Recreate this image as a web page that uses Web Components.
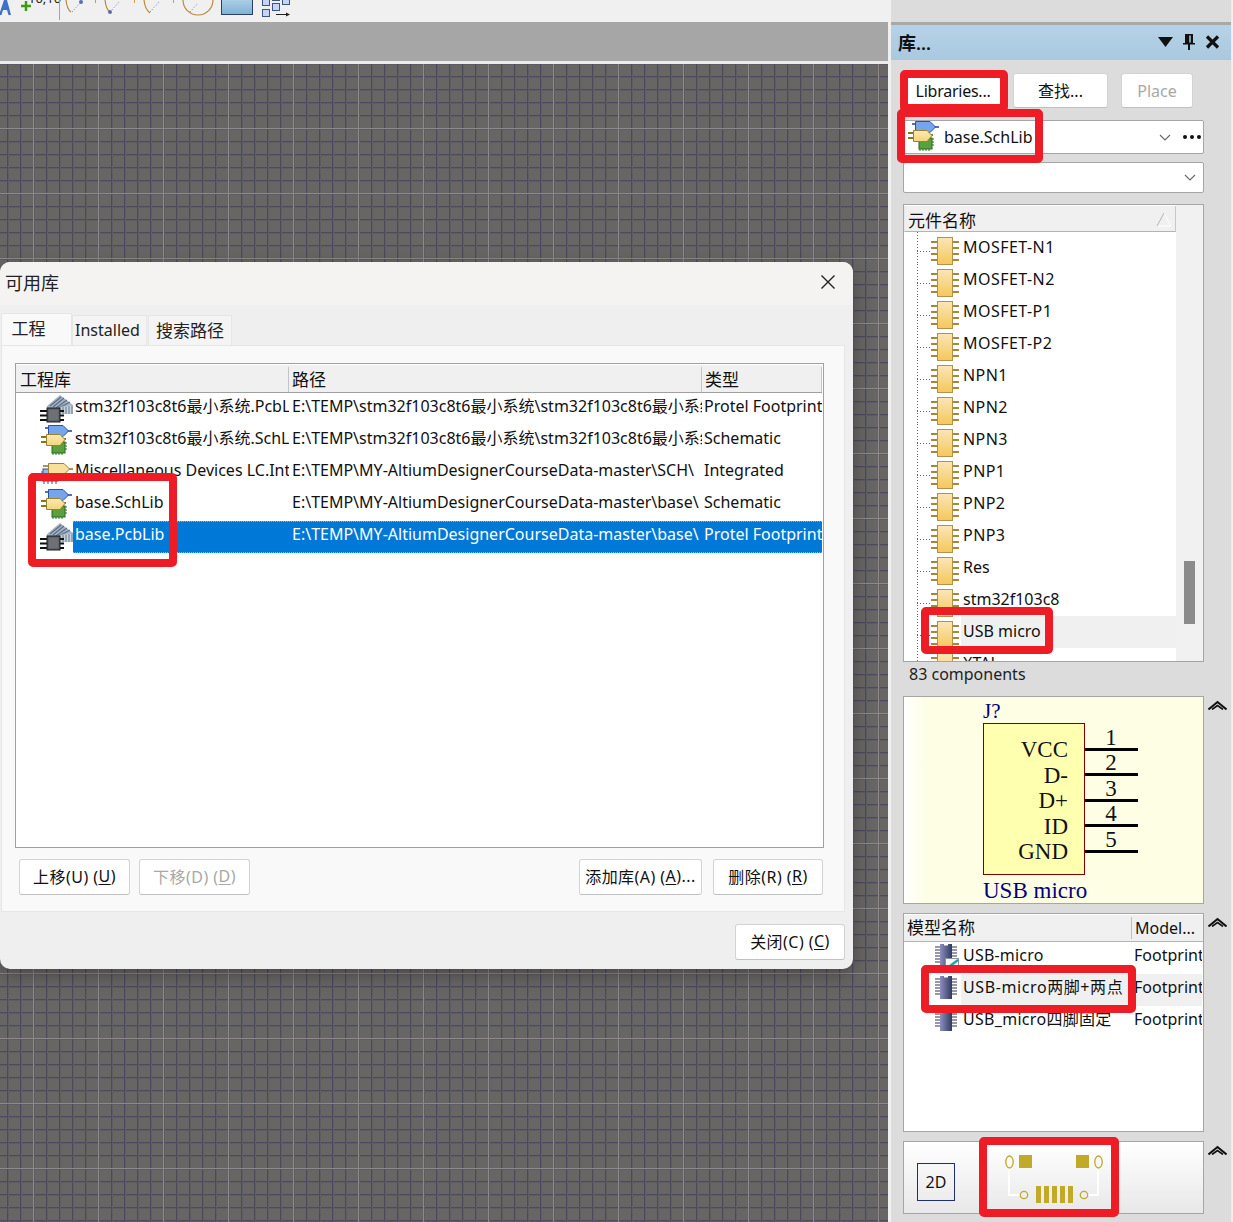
<!DOCTYPE html>
<html lang="zh">
<head>
<meta charset="utf-8">
<title>Libraries</title>
<style>
  html, body { margin: 0; height: 100%; }
  body {
    width: 1233px;
    height: 1222px;
    overflow: hidden;
    position: relative;
    background: #f0f0f0;
    color: #111;
    font: 16px "Noto Sans", "Noto Sans CJK SC", sans-serif;
    display: grid;
    grid-template-columns: 888px 345px;
  }
</style>
</head>
<body>
  <editor-area>
    <libraries-dialog></libraries-dialog>
  </editor-area>
  <lib-panel></lib-panel>

  <red-mark x="900" y="70" w="108" h="42"></red-mark>
  <red-mark x="897" y="109" w="146" h="54"></red-mark>
  <red-mark x="28" y="473" w="149" h="94"></red-mark>
  <red-mark x="921" y="607" w="132" h="47"></red-mark>
  <red-mark x="921" y="965" w="215" h="48"></red-mark>
  <red-mark x="979" y="1137" w="140" h="80"></red-mark>

<script>
const FP_BODY = `
    <defs><linearGradient id="f" x1="0" y1="0" x2="1" y2="0"><stop offset="0" stop-color="#8e8fc0"/><stop offset="1" stop-color="#2f3b60"/></linearGradient></defs>
    <path d="M0 3h5M0 6h5M0 9h5M0 12h5M0 15h5M0 18h5M17 3h5M17 6h5M17 9h5M17 12h5M17 15h5M17 18h5" stroke="#33344a" stroke-width="1.200"/>
    <path d="M5 0h4v1.500h4V0h4v23H5Z" fill="url(#f)"/>`;

const ICONS = {
  pcb: `
    <path d="M7 13 20 2 33 12V21H7Z" fill="#a3b3c5"/>
    <path d="M10 13 21 4M13 14 24 5M16 15 27 7M19 15 30 9" stroke="#5f7088" stroke-width="1.300"/>
    <path d="M20 14 33 12V21H20Z" fill="#c8d2dc"/>
    <path d="M23 14V21M26 13.500V21M29 13V21M32 12.500V21" stroke="#6d7d90" stroke-width="1.100"/>
    <path d="M0 18h7M0 22.500h7M0 27h7M20 18h4M20 22.500h4M20 27h4" stroke="#111" stroke-width="2"/>
    <rect x="7" y="15" width="13" height="14" fill="#54575c" stroke="#1d1e20"/>
    <rect x="8.500" y="16.500" width="10" height="11" fill="#6d7075"/>`,
  sch: `
    <defs><linearGradient id="y" x1="0" y1="0" x2="0" y2="1"><stop offset="0" stop-color="#fbeab0"/><stop offset="1" stop-color="#f2d47c"/></linearGradient></defs>
    <path d="M5 3h4M27 6h5" stroke="#27408f" stroke-width="1.500"/>
    <path d="M8.500 .5H23L28.500 6 23 11.500H8.500Z" fill="#76a5ee" stroke="#2c50a8"/>
    <rect x="12" y="17" width="13" height="11" fill="#57a23c" stroke="#2c6a20"/>
    <path d="M13 28v2M16 28v2M19 28v2M22 28v2M25 18h2M25 21h2M25 24h2" stroke="#2c6a20"/>
    <path d="M1 12h6M1 17h6M23 14h3" stroke="#8c7320" stroke-width="2"/>
    <path d="M6.500 9.500H20L25 14.500 20 20.500H6.500Z" fill="url(#y)" stroke="#9c8230"/>`,
  int: `
    <rect x="3" y="12" width="15" height="12" fill="#9ab6ea" stroke="#2c50a8"/>
    <path d="M4 24v3M8 24v3M12 24v3M16 24v3M1 15h2M1 19h2" stroke="#2c50a8"/>
    <path d="M3 9h5M29 12h4" stroke="#8c7320" stroke-width="1.500"/>
    <path d="M8.500 6.500H24L29.500 12 24 17.500H8.500Z" fill="#f7e09a" stroke="#9c8230"/>`,
  comp: `
    <defs><linearGradient id="c" x1="0" y1="0" x2="0" y2="1"><stop offset="0" stop-color="#fbe6b8"/><stop offset="1" stop-color="#f6c75a"/></linearGradient></defs>
    <path d="M0 5h6M0 11h6M0 17h6M0 23h6M22 5h6M22 11h6M22 17h6M22 23h6" stroke="#a5893a" stroke-width="2"/>
    <rect x="6.500" y=".5" width="15" height="27" fill="url(#c)" stroke="#b0924a"/>`,
  fp: FP_BODY,
  fpcheck: FP_BODY + `
    <rect x="10.500" y="14.500" width="13" height="9" fill="#f4f6f8" stroke="#8b9099"/>
    <path d="M15 22 23 16" stroke="#18a6b0" stroke-width="2.200"/>`,
};
const ICON_SIZES = { pcb: [33, 32], sch: [33, 32], int: [33, 32], comp: [28, 28], fp: [22, 23], fpcheck: [22, 23] };

class LibIcon extends HTMLElement {
  constructor() {
    super();
    this.attachShadow({ mode: "open" });
  }
  connectedCallback() {
    const type = this.getAttribute("type") || "sch";
    const [w, h] = ICON_SIZES[type];
    this.shadowRoot.innerHTML = `
      <style>
        :host { display: block; width: ${w}px; height: ${h}px; flex: none; }
        svg { display: block; overflow: visible; }
      </style>
      <svg width="${w}" height="${h}" viewBox="0 0 ${w} ${h}" fill="none">${ICONS[type]}</svg>`;
  }
}

class UiButton extends HTMLElement {
  constructor() {
    super();
    this.attachShadow({ mode: "open" });
    this.shadowRoot.innerHTML = `
      <style>
        :host {
          display: flex;
          flex: none;
          align-items: center;
          justify-content: center;
          box-sizing: border-box;
          height: 36px;
          background: #fff;
          border: 1px solid #d3d3d3;
          border-bottom-color: #c0c0c0;
          border-radius: 3px;
          white-space: nowrap;
          font-size: 16px;
          color: #111;
        }
        :host([disabled]) { color: #a8a8a8; }
      </style>
      <slot></slot>`;
  }
}

class RedMark extends HTMLElement {
  constructor() {
    super();
    this.attachShadow({ mode: "open" });
  }
  connectedCallback() {
    const a = (n) => this.getAttribute(n);
    this.shadowRoot.innerHTML = `
      <style>
        :host {
          position: absolute;
          left: ${a("x")}px;
          top: ${a("y")}px;
          width: ${a("w")}px;
          height: ${a("h")}px;
          box-sizing: border-box;
          border: 8px solid #ee1c25;
          border-radius: 5px;
          z-index: 10;
        }
      </style>`;
  }
}

class ToolBar extends HTMLElement {
  constructor() {
    super();
    this.attachShadow({ mode: "open" });
    this.shadowRoot.innerHTML = `
      <style>
        :host { display: block; height: 22px; background: #f0f0f0; overflow: hidden; }
        svg { display: block; }
        text { font: 13px "Noto Sans", sans-serif; fill: #222; }
      </style>
      <svg width="320" height="22" fill="none">
        <path d="M-1 15 4 0H7L11 15H8.500L7 10H3L1.500 15Z" fill="#3f6fd0"/>
        <text x="28" y="3">10,10</text>
        <path d="M26 1V11M21 6H31" stroke="#3aa010" stroke-width="2.500"/>
        <path d="M59.500 0V20" stroke="#a4a4a4"/>

        <path d="M66 0C66.500 5 68 10 71 12" stroke="#b98a3e" stroke-width="1.200"/>
        <path d="M72 12 81 2" stroke="#5b74c8" stroke-dasharray="1 2"/>
        <circle cx="81" cy="2" r="2" fill="#5870a8"/>
        <path d="M95.500 0V3" stroke="#d29a4a"/>

        <path d="M105 0C105.500 5 107 10 110 12" stroke="#b98a3e" stroke-width="1.200"/>
        <path d="M110 12 120 1" stroke="#5b74c8" stroke-dasharray="1 2"/>
        <circle cx="110" cy="12" r="2" fill="#5870a8"/>
        <path d="M134.500 0V3" stroke="#d29a4a"/>

        <path d="M144 0C144.500 5 146 10 150 13" stroke="#b98a3e" stroke-width="1.200"/>
        <path d="M150 12 159 2" stroke="#5b74c8" stroke-dasharray="1 2"/>
        <path d="M173.500 0V3" stroke="#d29a4a"/>

        <circle cx="198" cy="0" r="15" stroke="#b98a3e" stroke-width="1.200"/>
        <path d="M190 12 198 3" stroke="#5b74c8" stroke-dasharray="1 2"/>

        <defs><linearGradient id="bar" x1="0" y1="0" x2="0" y2="1"><stop offset="0" stop-color="#b4d2e8"/><stop offset="1" stop-color="#7eb2d8"/></linearGradient></defs>
        <rect x="221.500" y="-2.500" width="31" height="17" fill="url(#bar)" stroke="#2c3e66"/>

        <g fill="#c6d6f2" stroke="#3c5488">
          <rect x="262.500" y="-2.500" width="7" height="8"/>
          <rect x="262.500" y="9.500" width="7" height="7"/>
          <rect x="272.500" y="3.500" width="7" height="7"/>
          <rect x="282.500" y="-3.500" width="7" height="8"/>
          <path d="M272 .5H280"/>
        </g>
        <path d="M276 14.500H289" stroke="#222"/>
        <path d="M286 12.500 290 14.500 286 16.500Z" fill="#222"/>
      </svg>`;
  }
}

class EditorArea extends HTMLElement {
  constructor() {
    super();
    this.attachShadow({ mode: "open" });
    this.shadowRoot.innerHTML = `
      <style>
        :host {
          display: flex;
          flex-direction: column;
          height: 1222px;
          position: relative;
          overflow: hidden;
        }
        .strip { height: 39px; background: #a6a6a6; }
        .line { height: 3px; background: #ececec; }
        .canvas {
          flex: 1;
          background-color: #686664;
          background-image:
            linear-gradient(to right, #8c8a88 1px, transparent 1px),
            linear-gradient(to bottom, #8c8a88 1px, transparent 1px),
            linear-gradient(to right, #4d4a5e 1px, #5f5d64 1px, #5f5d64 2px, transparent 2px),
            linear-gradient(to bottom, #4d4a5e 1px, #5f5d64 1px, #5f5d64 2px, transparent 2px);
          background-size: 65px 65px, 65px 65px, 13px 13px, 13px 13px;
          background-position: 33px -1px, 33px -1px, 7px 12px, 7px 12px;
        }
      </style>
      <tool-bar></tool-bar>
      <div class="strip"></div>
      <div class="line"></div>
      <div class="canvas"></div>
      <slot></slot>`;
  }
}

class LibRow extends HTMLElement {
  constructor() {
    super();
    this.attachShadow({ mode: "open" });
  }
  connectedCallback() {
    const a = (n) => this.getAttribute(n) || "";
    this.shadowRoot.innerHTML = `
      <style>
        :host {
          display: grid;
          grid-template-columns: 57px 1fr;
          height: 32px;
        }
        .ic { padding-left: 24px; }
        .body {
          display: grid;
          grid-template-columns: 216px 413px 120px;
          align-items: center;
          box-sizing: border-box;
          height: 32px;
          line-height: 26px;
        }
        :host([selected]) .body {
          background: #0078d7;
          color: #fff;
          border-top: 1px dotted #e9a14a;
          border-bottom: 1px dotted #e9a14a;
        }
        span {
          display: block;
          white-space: nowrap;
          overflow: hidden;
          padding-left: 2px;
          margin-top: -7px;
        }
        .path { padding-left: 3px; }
      </style>
      <div class="ic"><lib-icon type="${a("icon")}"></lib-icon></div>
      <div class="body">
        <span>${a("name")}</span>
        <span class="path">${a("path")}</span>
        <span>${a("kind")}</span>
      </div>`;
  }
}

class LibrariesDialog extends HTMLElement {
  constructor() {
    super();
    this.attachShadow({ mode: "open" });
    this.shadowRoot.innerHTML = `
      <style>
        :host {
          position: absolute;
          left: 0;
          top: 262px;
          width: 853px;
          height: 707px;
          background: #efefef;
          border-radius: 10px;
          box-shadow: 0 6px 20px rgba(0,0,0,.3);
          display: flex;
          flex-direction: column;
          overflow: hidden;
        }
        .title {
          height: 43px;
          flex: none;
          box-sizing: border-box;
          background: #f5f3f1;
          display: flex;
          align-items: center;
          justify-content: space-between;
          padding: 0 17px 4px 5px;
          font-size: 18px;
          color: #222;
        }
        .tabs {
          height: 40px;
          flex: none;
          padding-left: 1px;
          display: flex;
          align-items: flex-end;
        }
        .tab {
          box-sizing: border-box;
          height: 30px;
          border: 1px solid #e6e6e6;
          border-bottom: 0;
          background: #f4f4f4;
          display: flex;
          align-items: center;
          justify-content: center;
          padding-bottom: 1px;
          font-size: 16px;
          color: #222;
        }
        .tab.on { height: 32px; width: 71px; background: #f9f9f9; font-size: 17px; padding-bottom: 5px; padding-right: 16px; }
        .tab.b { width: 75px; padding-right: 4px; }
        .tab.c { width: 84px; margin-left: 1px; font-size: 17px; padding-bottom: 2px; }
        .sheet {
          box-sizing: border-box;
          width: 844px;
          height: 567px;
          flex: none;
          margin-left: 1px;
          background: #f9f9f9;
          border: 1px solid #e6e6e6;
          padding: 17px 20px 0 13px;
        }
        .table {
          box-sizing: border-box;
          height: 485px;
          background: #fff;
          border: 1px solid #a0a0a0;
        }
        .head {
          display: grid;
          grid-template-columns: 273px 413px 1fr;
          height: 28px;
          margin-top: 1px;
          background: #f0f0f0;
          border-bottom: 1px solid #a0a0a0;
          box-sizing: border-box;
          font-size: 17px;
          width: 806px;
        }
        .head div { padding-left: 3px; border-right: 1px solid #c4c4c4; white-space: nowrap; margin: 2px 0; line-height: 25px; }
        .head div:first-child { padding-left: 4px; }
        .rows { width: 806px; }
        .actions {
          display: flex;
          margin-top: 11px;
          padding-left: 4px;
          letter-spacing: .45px;
        }
        .actions ui-button { width: 111px; margin-right: 9px; padding-bottom: 2px; }
        .actions .add { width: 123px; margin-left: 320px; margin-right: 11px; }
        .actions .del { width: 110px; margin-right: 0; }
        .foot { display: flex; justify-content: flex-end; padding: 12px 8px 0 0; letter-spacing: .45px; }
        .foot ui-button { width: 110px; padding-bottom: 2px; }
        u { text-underline-offset: 2px; }
      </style>
      <div class="title">
        <span>可用库</span>
        <svg width="16" height="16" viewBox="0 0 16 16" fill="none"><path d="M1.500 1.500 14.500 14.500M14.500 1.500 1.500 14.500" stroke="#222" stroke-width="1.400"/></svg>
      </div>
      <div class="tabs">
        <div class="tab on">工程</div>
        <div class="tab b">Installed</div>
        <div class="tab c">搜索路径</div>
      </div>
      <div class="sheet">
        <div class="table">
          <div class="head"><div>工程库</div><div>路径</div><div>类型</div></div>
          <div class="rows">
            <lib-row icon="pcb" name="stm32f103c8t6最小系统.PcbLib" path="E:\\TEMP\\stm32f103c8t6最小系统\\stm32f103c8t6最小系统\\" kind="Protel Footprint Library"></lib-row>
            <lib-row icon="sch" name="stm32f103c8t6最小系统.SchLib" path="E:\\TEMP\\stm32f103c8t6最小系统\\stm32f103c8t6最小系统\\" kind="Schematic"></lib-row>
            <lib-row icon="int" name="Miscellaneous Devices LC.IntLib" path="E:\\TEMP\\MY-AltiumDesignerCourseData-master\\SCH\\" kind="Integrated"></lib-row>
            <lib-row icon="sch" name="base.SchLib" path="E:\\TEMP\\MY-AltiumDesignerCourseData-master\\base\\" kind="Schematic"></lib-row>
            <lib-row icon="pcb" name="base.PcbLib" path="E:\\TEMP\\MY-AltiumDesignerCourseData-master\\base\\" kind="Protel Footprint Library" selected></lib-row>
          </div>
        </div>
        <div class="actions">
          <ui-button>上移(U) (<u>U</u>)</ui-button>
          <ui-button disabled>下移(D) (<u>D</u>)</ui-button>
          <ui-button class="add">添加库(A) (<u>A</u>)...</ui-button>
          <ui-button class="del">删除(R) (<u>R</u>)</ui-button>
        </div>
      </div>
      <div class="foot"><ui-button>关闭(C) (<u>C</u>)</ui-button></div>`;
  }
}

class TreeRow extends HTMLElement {
  constructor() {
    super();
    this.attachShadow({ mode: "open" });
    this.shadowRoot.innerHTML = `
      <style>
        :host {
          display: flex;
          align-items: center;
          gap: 4px;
          height: 32px;
          box-sizing: border-box;
          padding-left: 27px;
          white-space: nowrap;
          background:
            repeating-linear-gradient(to bottom, #666 0 1px, transparent 1px 3px) 13px 0 / 1px 100% no-repeat,
            repeating-linear-gradient(to right, #666 0 1px, transparent 1px 3px) 13px 19px / 14px 1px no-repeat;
        }
        :host([active]) {
          background:
            linear-gradient(#f0f0f0, #f0f0f0) 57px 0 / 100% 100% no-repeat,
            repeating-linear-gradient(to bottom, #666 0 1px, transparent 1px 3px) 13px 0 / 1px 100% no-repeat,
            repeating-linear-gradient(to right, #666 0 1px, transparent 1px 3px) 13px 19px / 14px 1px no-repeat;
        }
        :host([caps]) span { letter-spacing: .45px; }
        lib-icon { align-self: flex-start; margin-top: 5px; }
        span { margin-top: -2px; }
      </style>
      <lib-icon type="comp"></lib-icon>
      <span><slot></slot></span>`;
  }
}

class ModelRow extends HTMLElement {
  constructor() {
    super();
    this.attachShadow({ mode: "open" });
  }
  connectedCallback() {
    this.shadowRoot.innerHTML = `
      <style>
        :host {
          display: grid;
          grid-template-columns: 229px 1fr;
          height: 32px;
          line-height: 26px;
          white-space: nowrap;
          overflow: hidden;
          margin-right: 1px;
        }
        :host([active]) { background: linear-gradient(#f0f0f0, #f0f0f0) 57px 0 / 100% 100% no-repeat; }
        .name { display: flex; gap: 6px; padding-left: 31px; }
        lib-icon { margin-top: 2px; }
        .kind { overflow: hidden; padding-left: 1px; }
      </style>
      <div class="name"><lib-icon type="${this.getAttribute("icon") || "fp"}"></lib-icon><span style="letter-spacing:${this.getAttribute("track") || 0}px"><slot></slot></span></div>
      <div class="kind">Footprint</div>`;
  }
}

class ScrollChevron extends HTMLElement {
  constructor() {
    super();
    this.attachShadow({ mode: "open" });
    this.shadowRoot.innerHTML = `
      <style>
        :host { display: block; padding: 4px 0 0 4px; }
        svg { display: block; }
      </style>
      <svg width="19" height="10" viewBox="0 0 19 10" fill="none">
        <path d="M.5 9.500 9.500 2 18.500 9.500" stroke="#111" stroke-width="2"/>
        <path d="M4 9.500 9.500 5.500 15 9.500" stroke="#111" stroke-width="1.600"/>
      </svg>`;
  }
}

class ComboBox extends HTMLElement {
  constructor() {
    super();
    this.attachShadow({ mode: "open" });
    this.shadowRoot.innerHTML = `
      <style>
        :host {
          display: flex;
          align-items: center;
          box-sizing: border-box;
          width: 301px;
          background: #fff;
          border: 1px solid #a6a6a6;
          border-radius: 2px;
          padding-left: 3px;
          white-space: nowrap;
        }
        .grow { flex: 1; }
        svg { display: block; flex: none; }
      </style>
      <slot></slot>
      <span class="grow"></span>
      <svg width="12" height="7" viewBox="0 0 12 7" fill="none"><path d="M1 1 6 6 11 1" stroke="#666" stroke-width="1.100"/></svg>
      <slot name="end"></slot>`;
  }
}

class LibPanel extends HTMLElement {
  constructor() {
    super();
    this.attachShadow({ mode: "open" });
    const names = ["MOSFET-N1", "MOSFET-N2", "MOSFET-P1", "MOSFET-P2", "NPN1", "NPN2", "NPN3", "PNP1", "PNP2", "PNP3", "Res", "stm32f103c8", "USB micro", "XTAL"];
    const tree = names.map((n) => `<tree-row${n === "USB micro" ? " active" : ""}${/^(MOS|NPN|PNP)/.test(n) ? " caps" : ""}>${n}</tree-row>`).join("");
    this.shadowRoot.innerHTML = `
      <style>
        :host {
          display: block;
          margin-left: 3px;
          width: 340px;
          height: 1222px;
          background: #dcdcdc;
          border-right: 1px solid #ececec;
          overflow: hidden;
        }
        .cap {
          background: linear-gradient(to bottom, #b6d2e6, #a9c9e0);
          border-top: 3px solid #a9a9a9;
          box-sizing: border-box;
          margin-top: 22px;
          height: 38px;
          display: flex;
          align-items: center;
          padding: 0 11px 2px 7px;
          font-size: 18px;
          font-weight: 600;
          color: #111;
        }
        .cap .t { flex: 1; }
        .cap svg { display: block; margin-left: 9px; }
        .body { padding-left: 12px; }
        .btns { display: flex; padding: 13px 0 12px 1px; }
        .btns ui-button { height: 35px; }
        .combo1 { height: 34px; margin-bottom: 8px; padding-right: 2px; }
        .combo2 { height: 31px; margin-bottom: 11px; padding-right: 7px; }
        .dots { display: flex; gap: 3px; margin-left: 12px; }
        .dots i { width: 4px; height: 4px; border-radius: 50%; background: #111; display: block; }
        .lbl { margin-left: 4px; }

        .tree {
          box-sizing: border-box;
          width: 301px;
          height: 458px;
          border: 1px solid #a6a6a6;
          background: #f1f1f1;
          overflow: hidden;
          display: grid;
          grid-template-columns: 272px 1fr;
        }
        .tree .left { background: #fff; }
        .thd {
          box-sizing: border-box;
          height: 26px;
          margin-top: 1px;
          background: #f0f0f0;
          border-bottom: 1px solid #b4b4b4;
          border-right: 1px solid #c8c8c8;
          border-left: 1px solid #e8e8e8;
          display: flex;
          align-items: center;
          justify-content: space-between;
          padding: 1px 3px 0 3px;
          font-size: 17px;
        }
        .track { padding: 356px 0 0 8px; }
        .thumb { width: 11px; height: 63px; background: #8b8b8b; }
        .status { height: 34px; padding-left: 6px; line-height: 24px; color: #222; }

        .row { display: grid; grid-template-columns: 301px 1fr; margin-bottom: 9px; }
        .preview {
          box-sizing: border-box;
          height: 208px;
          border: 1px solid #a6a6a6;
          background: linear-gradient(to right, #fff, #fdfee4 24px);
        }
        .preview svg { display: block; }
        .preview text { font-family: "Liberation Serif", serif; }
        .models {
          box-sizing: border-box;
          height: 219px;
          border: 1px solid #a6a6a6;
          background: #fff;
        }
        .mhd {
          display: grid;
          grid-template-columns: 228px 1fr;
          height: 27px;
          margin-top: 1px;
          background: #f0f0f0;
          border-bottom: 1px solid #b4b4b4;
          box-sizing: border-box;
          font-size: 17px;
          white-space: nowrap;
        }
        .mhd div { padding-left: 3px; line-height: 26px; }
        .mhd div:first-child { border-right: 1px solid #c0c0c0; margin: 2px 0; line-height: 22px; }
        .mhd div:last-child { font-size: 16px; }
        .foot {
          box-sizing: border-box;
          height: 73px;
          border: 1px solid #a6a6a6;
          background: linear-gradient(to bottom, #fff, #e8e8e8);
          display: flex;
          align-items: center;
          padding-left: 13px;
        }
        .d2 {
          box-sizing: border-box;
          width: 38px;
          height: 38px;
          border: 1px solid #1f2f70;
          display: flex;
          align-items: center;
          justify-content: center;
          margin-top: 8px;
        }
        .pads { display: block; margin-left: 40px; flex: none; }
      </style>
      <div class="cap">
        <span class="t">库...</span>
        <svg width="15" height="11" viewBox="0 0 15 11"><path d="M0 1H15L7.500 11Z" fill="#111"/></svg>
        <svg width="14" height="17" viewBox="0 0 14 17" fill="none"><path d="M3 1H11V10H13V11.500H1V10H3Z" fill="#111"/><path d="M7 11V17" stroke="#111" stroke-width="2"/><path d="M8 2.500V9.500" stroke="#a9c9e0" stroke-width="1.500"/></svg>
        <svg width="15" height="14" viewBox="0 0 15 14" fill="none"><path d="M2 1.500 13 12.500M13 1.500 2 12.500" stroke="#111" stroke-width="3.200"/></svg>
      </div>
      <div class="body">
        <div class="btns">
          <ui-button style="width:98px;letter-spacing:-.25px">Libraries...</ui-button>
          <ui-button style="width:95px;margin-left:11px;padding-bottom:1px">查找...</ui-button>
          <ui-button disabled style="width:72px;margin-left:13px">Place</ui-button>
        </div>
        <combo-box class="combo1">
          <lib-icon type="sch"></lib-icon>
          <span class="lbl">base.SchLib</span>
          <span slot="end" class="dots"><i></i><i></i><i></i></span>
        </combo-box>
        <combo-box class="combo2"></combo-box>
        <div class="tree">
          <div class="left">
            <div class="thd"><span>元件名称</span>
              <svg width="16" height="15" viewBox="0 0 16 15" fill="none"><path d="M1 14H15L8 1" stroke="#fff"/><path d="M8 1 1 14" stroke="#b4b4b4"/></svg>
            </div>
            ${tree}
          </div>
          <div class="track"><div class="thumb"></div></div>
        </div>
        <div class="status">83 components</div>
        <div class="row">
          <div class="preview">
            <svg width="299" height="206" viewBox="904 697 299 206" fill="none">
              <rect x="983.500" y="723.500" width="101" height="151" fill="#ffffb0" stroke="#800000"/>
              <text x="983" y="718" font-size="21" fill="#000080">J?</text>
              <g font-size="23" fill="#111" text-anchor="end">
                <text x="1068" y="757">VCC</text>
                <text x="1068" y="783">D-</text>
                <text x="1068" y="808">D+</text>
                <text x="1068" y="834">ID</text>
                <text x="1068" y="859">GND</text>
              </g>
              <path d="M1085 749.500H1138M1085 774.500H1138M1085 800.500H1138M1085 825.500H1138M1085 851.500H1138" stroke="#000" stroke-width="3"/>
              <g font-size="23" fill="#111" text-anchor="middle">
                <text x="1111" y="745">1</text>
                <text x="1111" y="770">2</text>
                <text x="1111" y="796">3</text>
                <text x="1111" y="821">4</text>
                <text x="1111" y="847">5</text>
              </g>
              <text x="983" y="898" font-size="23" fill="#000080">USB micro</text>
            </svg>
          </div>
          <scroll-chevron></scroll-chevron>
        </div>
        <div class="row">
          <div class="models">
            <div class="mhd"><div>模型名称</div><div>Model...</div></div>
            <model-row icon="fpcheck" track=".2">USB-micro</model-row>
            <model-row active track=".6">USB-micro两脚+两点</model-row>
            <model-row track=".3">USB_micro四脚固定</model-row>
          </div>
          <scroll-chevron></scroll-chevron>
        </div>
        <div class="row">
          <div class="foot">
            <div class="d2">2D</div>
            <svg class="pads" width="120" height="60" viewBox="995 1147 120 60" fill="none">
              <path d="M1009 1167V1194H1020M1098 1167V1194H1088" stroke="#fff" stroke-width="2"/>
              <g stroke="#c1a92a" stroke-width="1.300">
                <ellipse cx="1009.500" cy="1161" rx="3.700" ry="6"/>
                <ellipse cx="1098.500" cy="1161" rx="3.700" ry="6"/>
                <circle cx="1024" cy="1194" r="3.700"/>
                <circle cx="1084" cy="1194" r="3.700"/>
              </g>
              <g fill="#c1a92a">
                <rect x="1019" y="1154" width="13" height="13"/>
                <rect x="1076" y="1154" width="13" height="13"/>
                <rect x="1036" y="1185" width="5" height="17"/>
                <rect x="1044" y="1185" width="5" height="17"/>
                <rect x="1052" y="1185" width="5" height="17"/>
                <rect x="1060" y="1185" width="5" height="17"/>
                <rect x="1068" y="1185" width="5" height="17"/>
              </g>
            </svg>
          </div>
          <scroll-chevron></scroll-chevron>
        </div>
      </div>`;
  }
}

customElements.define("lib-icon", LibIcon);
customElements.define("ui-button", UiButton);
customElements.define("red-mark", RedMark);
customElements.define("tool-bar", ToolBar);
customElements.define("editor-area", EditorArea);
customElements.define("lib-row", LibRow);
customElements.define("libraries-dialog", LibrariesDialog);
customElements.define("tree-row", TreeRow);
customElements.define("model-row", ModelRow);
customElements.define("scroll-chevron", ScrollChevron);
customElements.define("combo-box", ComboBox);
customElements.define("lib-panel", LibPanel);
</script>
</body>
</html>
